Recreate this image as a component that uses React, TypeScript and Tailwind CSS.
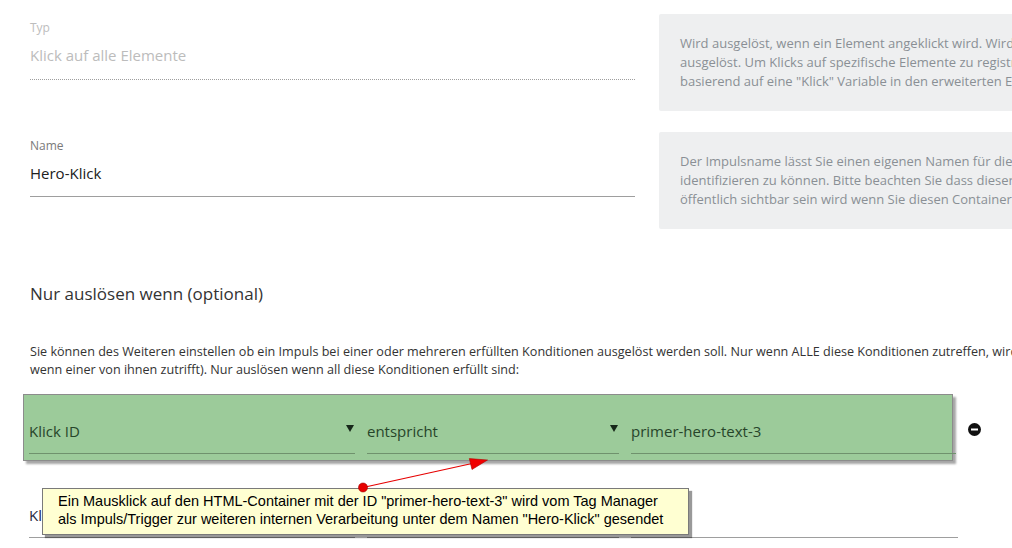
import type { ReactNode } from 'react';

function Caret() {
  return (
    <svg width="8" height="7" viewBox="0 0 8 7" className="mt-[5px] mr-px shrink-0">
      <path d="M0 0h8L4 7z" fill="#17281a" />
    </svg>
  );
}

function InfoBox({ lines }: { lines: string[] }) {
  return (
    <div className="w-[420px] shrink-0 rounded-[2px] bg-[#eeeff0] px-[21px] py-5 text-[13px] leading-[19px] text-[#8a8f95] whitespace-nowrap">
      {lines.map((l) => (
        <div key={l}>{l}</div>
      ))}
    </div>
  );
}

function Field({ label, value, dotted }: { label: string; value: string; dotted?: boolean }) {
  return (
    <div className="w-[605px] shrink-0 pt-[6px]">
      <div className={dotted ? 'text-[12px] leading-4 text-[#bdbdbd]' : 'text-[12px] leading-4 text-[#7a7a7a]'}>{label}</div>
      <div
        className={
          dotted
            ? 'mt-2 border-b border-dotted border-[#9e9e9e] pb-[13px] text-[15px] leading-[22px] text-[#bcbcbc]'
            : 'mt-2 border-b border-[#9e9e9e] pb-3 text-[15px] leading-[22px] text-[#212121]'
        }
      >
        {value}
      </div>
    </div>
  );
}

function Cell({ w, line, children, caret }: { w: string; line: string; children?: ReactNode; caret?: boolean }) {
  return (
    <div className={`${w} ${line} flex shrink-0 items-start justify-between border-b pb-[11px]`}>
      <span className="text-[15px] leading-[22px]">{children}</span>
      {caret && <Caret />}
    </div>
  );
}

export default function App() {
  return (
    <div className="relative h-[548px] w-[1012px] overflow-hidden bg-white font-['Open_Sans',sans-serif]">
      <div className="pl-[30px] pt-[14px]">
        <div className="flex items-start gap-6">
          <Field label="Typ" value="Klick auf alle Elemente" dotted />
          <InfoBox
            lines={[
              'Wird ausgelöst, wenn ein Element angeklickt wird. Wird für jeden Klick auf der Seite',
              'ausgelöst. Um Klicks auf spezifische Elemente zu registrieren, fügen Sie eine Kondition',
              'basierend auf eine "Klick" Variable in den erweiterten Einstellungen hinzu.',
            ]}
          />
        </div>
        <div className="mt-[21px] flex items-start gap-6">
          <Field label="Name" value="Hero-Klick" />
          <InfoBox
            lines={[
              'Der Impulsname lässt Sie einen eigenen Namen für diesen Impuls vergeben, um ihn leichter',
              'identifizieren zu können. Bitte beachten Sie dass dieser Name in Ihrem Container',
              'öffentlich sichtbar sein wird wenn Sie diesen Container veröffentlichen.',
            ]}
          />
        </div>

        <h2 className="mt-[53px] text-[17px] leading-6 font-normal text-[#333]">Nur auslösen wenn (optional)</h2>

        <div className="mt-[37px] whitespace-nowrap text-[12.6px] leading-[18px] text-[#333]">
          <div>
            Sie können des Weiteren einstellen ob ein Impuls bei einer oder mehreren erfüllten Konditionen ausgelöst werden soll. Nur wenn ALLE diese Konditionen zutreffen, wird der Impuls ausgelöst (statt
          </div>
          <div>wenn einer von ihnen zutrifft). Nur auslösen wenn all diese Konditionen erfüllt sind:</div>
        </div>
      </div>

      {/* condition rows */}
      <div className="ml-[23px] mt-[15px] flex items-center">
        <div className="w-[930px] shrink-0 border border-[#8c8c8c] bg-[#9ccb9a] pl-[5px] pt-[25px] pb-[6px] text-[#27452a] shadow-[3px_3px_2px_rgba(0,0,0,0.35)]">
          <div className="flex gap-3">
            <Cell w="w-[326px]" line="border-[#6f926d]" caret>
              Klick ID
            </Cell>
            <Cell w="w-[252px]" line="border-[#6f926d]" caret>
              entspricht
            </Cell>
            <Cell w="w-[325px]" line="border-[#6f926d]">
              primer-hero-text-3
            </Cell>
          </div>
        </div>
        <svg width="13" height="13" viewBox="0 0 13 13" className="ml-[15px] mt-[3px]">
          <circle cx="6.5" cy="6.5" r="6.5" fill="#111" />
          <rect x="3" y="5.5" width="7" height="2" fill="#fff" />
        </svg>
      </div>

      <div className="ml-[23px] mt-[17px] w-[930px] border border-transparent pl-[5px] pt-[25px] text-[#1f2942]">
        <div className="flex gap-3">
          <Cell w="w-[326px]" line="border-[#9e9e9e]">
            Klick ID
          </Cell>
          <Cell w="w-[252px]" line="border-[#9e9e9e]" />
          <Cell w="w-[327px]" line="border-[#9e9e9e]" />
        </div>
      </div>

      {/* annotation callout */}
      <div className="absolute left-[42px] top-[488px] h-[47px] w-[647px] border border-[#7a7a7a] bg-[#ffffd2] pl-[15px] pt-[3px] font-['Liberation_Sans',Arial,sans-serif] text-[14.5px] leading-[18px] text-black shadow-[3px_3px_1px_rgba(0,0,0,0.4)]">
        <div>Ein Mausklick auf den HTML-Container mit der ID "primer-hero-text-3" wird vom Tag Manager</div>
        <div>als Impuls/Trigger zur weiteren internen Verarbeitung unter dem Namen "Hero-Klick" gesendet</div>
      </div>

      <svg className="pointer-events-none absolute inset-0" width="1012" height="548" viewBox="0 0 1012 548">
        <line x1="363" y1="487.5" x2="472" y2="463.5" stroke="#e60000" strokeWidth="1.2" />
        <path d="M487.5 460 L469.3 458.6 L472 469.5 Z" fill="#f00000" stroke="#b00000" strokeWidth="0.6" />
        <circle cx="363" cy="487.5" r="4.5" fill="#e60000" stroke="#a00000" strokeWidth="0.6" />
      </svg>
    </div>
  );
}
